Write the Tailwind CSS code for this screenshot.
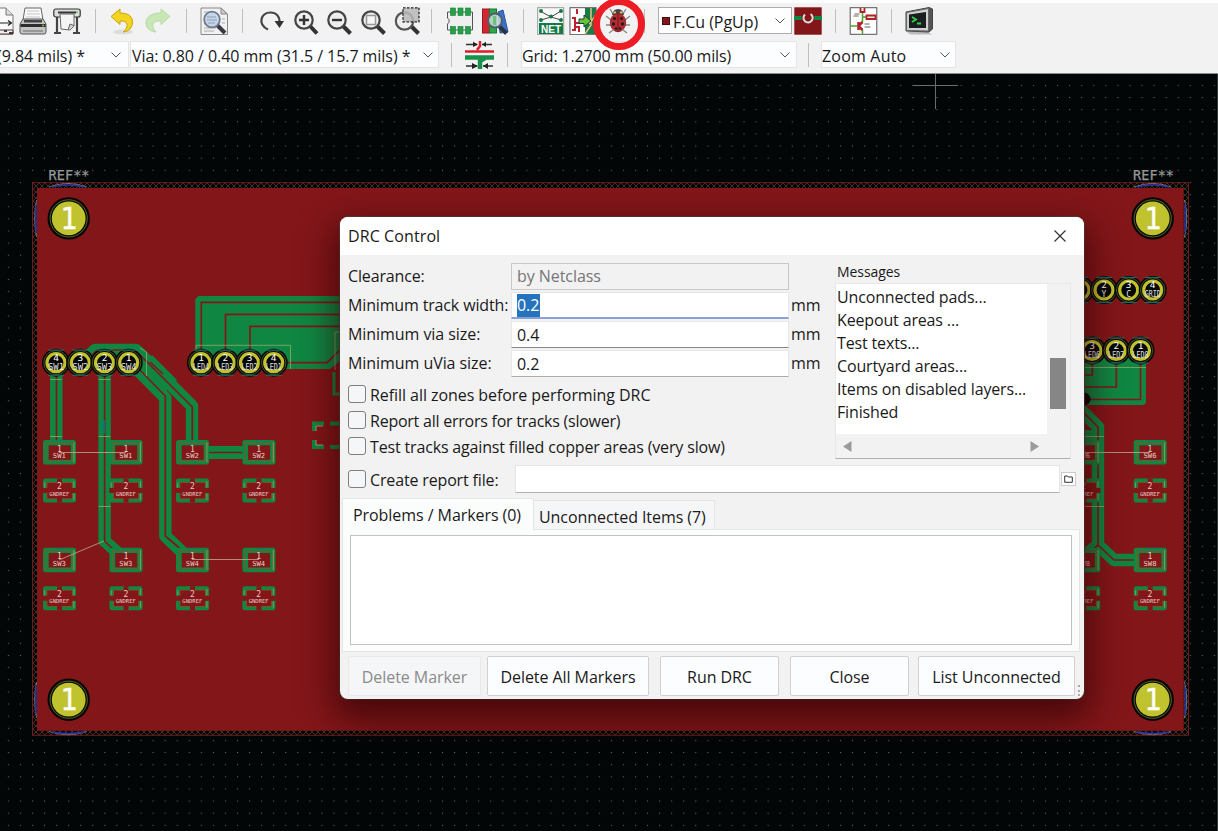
<!DOCTYPE html>
<html lang="en">
<head>
<meta charset="utf-8">
<title>Pcbnew - DRC Control</title>
<script src="https://cdn.jsdelivr.net/npm/@tailwindcss/browser@4"></script>
</head>
<body class="relative w-[1218px] h-[831px] overflow-hidden bg-[#020607] font-['Open_Sans','Noto_Sans',sans-serif] text-[16px] text-[#1a1a1a] tracking-[-0.06px]">

<!-- Board canvas -->
<svg class="absolute inset-0 tracking-normal" width="1218" height="831" viewBox="0 0 1218 831">
  <defs>
    <pattern id="grid" x="26.4" y="79.3" width="12.06" height="12.13" patternUnits="userSpaceOnUse"><rect x="5.6" y="5.6" width="1" height="1" fill="#6d7272"/></pattern>
    <pattern id="hatch" width="6" height="6" patternUnits="userSpaceOnUse"><path d="M0 6L6 0M0 0L6 6" stroke="#4a3f2c" stroke-width=".8" fill="none"/></pattern>
    <g id="hole"><circle r="21.2" fill="#050808"/><circle r="18.6" fill="none" stroke="#77772a" stroke-width=".8"/><circle r="16.9" fill="#c1c32e"/><text y="10.300" text-anchor="middle" font-size="30" fill="#fff" stroke="#fff" stroke-width=".3" font-family="DejaVu Sans Mono" textLength="17" lengthAdjust="spacingAndGlyphs">1</text></g>
    <g id="pin"><circle r="14" fill="#050808"/><circle r="12.2" fill="none" stroke="#6d6d28" stroke-width=".7"/><circle r="9" fill="#050808" stroke="#c1c32e" stroke-width="3.2"/><path d="M-8 -12.6H8M-8 12.6H8" stroke="#0e8c8c" stroke-width=".8"/></g>
    <g id="smd"><rect x="-16.3" y="-12.2" width="33" height="24.5" rx="2.5" fill="#0f8743"/><rect x="-13.4" y="-9.3" width="27" height="18.6" fill="none" stroke="#7c5a28" stroke-width=".9"/><rect x="-10.6" y="-7" width="22" height="14.5" fill="#831619"/><path d="M14.6 -10V10" stroke="#a3b06c" stroke-width=".7"/><path d="M-4 -11.5H8M3 9V11.5" stroke="#087b82" stroke-width=".8"/></g>
    <g id="gnd"><rect x="-16.3" y="-12" width="33" height="24" rx="2.5" fill="#0f8743"/><rect x="-12.4" y="-8.3" width="25.4" height="16.6" fill="#831619" stroke="#7c5a28" stroke-width=".9"/><path d="M-2.3 -12h5v24h-5zM-16.5 -2.5h33.5v5h-33.5z" fill="#831619"/><path d="M14.6 -9.5V-3M14.6 3V9.5M-14.6 -8V-3" stroke="#a3b06c" stroke-width=".7"/></g>
  </defs>
  <rect width="1218" height="831" fill="url(#grid)"/>
  <path d="M1217.5 74V831" stroke="#34393a"/>
  <path d="M913 85.5H958M935.5 74V109" stroke="#686c6c" stroke-width="1"/>
  <rect x="32.5" y="182.7" width="1156" height="552.6" fill="#030606"/>
  <rect x="32.5" y="182.7" width="1156" height="552.6" fill="url(#hatch)" stroke="#76181a" stroke-width="1"/>
  <path d="M49 187Q68 180 87 187M49 731.500Q68 738 87 731.500M1134 187Q1153 180 1171 187M1134 731.500Q1153 738 1171 731.500M36.500 200Q33 218 36.500 237M36.500 682Q33 700 36.500 718M1184.500 200Q1189 218 1184.500 237M1184.500 682Q1189 700 1184.500 718" fill="none" stroke="#8a8c93" stroke-width=".8"/>
  <path d="M52 187Q68 183 84 187M52 732Q68 735 84 732M1137 187Q1153 183 1169 187M1137 732Q1153 735 1169 732M36 205V232M36 687V714M1185 205V232M1185 687V714" fill="none" stroke="#29359b" stroke-width="1.6"/>
  <rect x="37" y="188" width="1146.7" height="542.8" fill="#831619"/>

  <g fill="none" stroke="#0f8743" stroke-width="12.4" stroke-linejoin="round">
    <path d="M56.300 366V445M104.600 366V541L118 553"/>
    <path d="M90 355L95 350H136L192 406V446"/>
    <path d="M130 362L165.300 398V536L182 552"/>
    <path d="M145 362L170 387" stroke-width="20"/>
    <path d="M205 452.500H247" stroke-width="13"/>
    <path d="M1076 405L1098 427V545L1114 560H1138M1098 545L1084 556"/>
  </g>
  <path d="M195.300 362V299L198.500 296H345V357L330 369H195.300Z" fill="#0f8743"/>
  <path d="M1080 356H1146V401Q1146 405 1142 405H1080Z" fill="#0f8743"/>
  <path d="M1080 398h5v40h-5zM1080 430H1104V445H1080zM1092 440H1104V500H1092z" fill="#0f8743"/>
  <g fill="none" stroke="#831619" stroke-width="1.700">
    <path d="M56.500 366V446M104.600 366V541L118 554M92 355L97 350H135L192.300 407V446M136 366L165.300 396V536L184 552M150 362L163 374M205 452.500H247"/>
    <path d="M201.300 362V302.300H345M225.500 362V314.300H345M250 362V326.300H345M286 362.700H327L340 350M1080 375H1092.300V358M1080 387H1116.300V358M1080 399.500H1140.500V358M1080 409L1098 427V545L1114 560H1138M1098 545L1086 556"/>
  </g>
  <g fill="none" stroke="#a3b06c" stroke-width=".7"><path d="M196 362V345.300H290.500V369M140 348L146.500 352V376M50 379.500H62M98.500 379.500H110.500M50 436.500H62M98.500 436.500H110.500M98.500 506.500H110.500M1084 367.500H1146M1084 436.500H1104M1084 506.500H1104M335 370V332H340"/></g>
  <path d="M334 372V394H340" fill="none" stroke="#0f8743" stroke-width="3"/>
  <path d="M324 423.500H314V431M314 440V447H324M330 423.500H342M330 447H342" fill="none" stroke="#0f8743" stroke-width="4"/>
  <path d="M323 426H316V431M316 440V445H323" fill="none" stroke="#b9c7a0" stroke-width=".7"/>
  <circle cx="1084" cy="399" r="6.500" fill="#050808"/>
  <path d="M102 429v-4l2-3v12" fill="none" stroke="#0a7a83" stroke-width="1.500"/>
  <g id="parts" font-family="DejaVu Sans Mono" text-anchor="middle"></g>
  <path d="M59 452.500H126M59 560L104 541M192 559.500H259M1083 452.500H1150" stroke="#c3a98a" stroke-width=".8" fill="none"/>
  <g fill="#969898" stroke="#969898" stroke-width=".25" font-family="DejaVu Sans Mono" font-size="13.500"><text x="48.500" y="179.500" textLength="41">REF**</text><text x="1133" y="179.500" textLength="41">REF**</text></g>
</svg>
<script>
  const out = [];
  const use = (id, x, y) => out.push(`<use href="#${id}" x="${x}" y="${y}"/>`);
  const label = (s, x, y, size, len, fill) => out.push(`<text x="${x}" y="${y}" font-size="${size}" fill="${fill}"${len ? ` textLength="${len}" lengthAdjust="spacingAndGlyphs"` : ''}>${s}</text>`);
  const pin = (x, y, n, name) => { use('pin', x, y); label(n, x, y - 2, 9.5, 0, '#fff'); if (name) label(name, x, y + 7.300, 8, name.length > 1 ? 16 : 0, '#e4e4e4'); };
  [[68.7, 218.4], [68.7, 699.7], [1152.7, 218.4], [1152.7, 699.7]].forEach(p => use('hole', p[0], p[1]));
  [56, 80.3, 104.5, 128.7].forEach((x, i) => pin(x, 362.7, 4 - i, 'SW' + (i + 1)));
  [201, 225.3, 249.5, 273.7].forEach((x, i) => pin(x, 362.7, i + 1, 'LED' + (4 - i)));
  [1080, 1104, 1128.7, 1152.7].forEach((x, i) => pin(x, 290, i + 1, ['C', 'Y', 'C', 'GRID'][i]));
  [1092, 1116.3, 1140.5].forEach((x, i) => pin(x, 350.5, 3 - i, 'LED' + (6 + i)));
  const pads = (x, a, b) => [[452.3, a], [560, b]].forEach(([y, name]) => {
    use('smd', x, y); label(1, x, y - .8, 8, 0, '#e9cdc5'); label(name, x, y + 5.7, 7, 13, '#e9cdc5');
    const g = y + 38.300; use('gnd', x, g); label(2, x, g - 1.200, 8, 0, '#e9cdc5'); label('GNDREF', x, g + 5, 5.5, 20, '#e9cdc5');
  });
  pads(59.300, 'SW1', 'SW3'); pads(125.800, 'SW1', 'SW3'); pads(192.300, 'SW2', 'SW4'); pads(258.700, 'SW2', 'SW4');
  pads(1083.500, 'SW6', 'SW8'); pads(1150, 'SW6', 'SW8');
  document.getElementById('parts').innerHTML = out.join('');
</script>

<!-- Toolbars -->
<header class="relative h-[74px] bg-[#f2f2f2] border-t-[3px] border-t-white border-b border-b-[#8b8b8b] overflow-visible">
  <div class="flex items-start h-[38px] pt-1">
    <svg class="-ml-[14px] w-7 h-7 shrink-0" viewBox="0 0 28 28"><path d="M3 1H20L27 8V27H3Z" fill="#fafafa" stroke="#777"/><path d="M20 1V8H27" fill="#ddd" stroke="#777"/><path d="M8 16H25M22 13.500L25.500 16L22 18.500" stroke="#222" fill="none" stroke-width="1.200"/><path d="M5 23H27V27H5Z" fill="#eee" stroke="#4c3734"/><path d="M18 24H21M23 26H27" stroke="#4c3734" stroke-width="2"/></svg>
    <svg class="ml-[5px] w-7 h-7 shrink-0" viewBox="0 0 28 28"><path d="M6 1H22L24 13H4Z" fill="#fafafa" stroke="#666"/><path d="M8 4H20M8 7H21M7 10H21" stroke="#c5c5c5"/><path d="M4 12H24L27 17V25Q27 27 25 27H3Q1 27 1 25V17Z" fill="#c4c4c4" stroke="#555"/><path d="M1.500 17H26.500V20H1.500Z" fill="#2e2e2e"/><path d="M5 13H23V15.500H5Z" fill="#444"/><path d="M4 24H24" stroke="#888" stroke-width="1.500"/><circle cx="24" cy="18.500" r="1" fill="#6d3"/></svg>
    <svg class="ml-[6px] w-7 h-7 shrink-0" viewBox="0 0 28 28"><path d="M4 8V25M24 8V25M1 26H8M20 26H27" stroke="#444" stroke-width="2.200"/><rect x=".8" y="2" width="26.400" height="8" rx="2" fill="#ddd" stroke="#333" stroke-width="1.200"/><path d="M5 5.500H23" stroke="#333" stroke-width="2"/><path d="M7 7H21V19L17 23L8 22Z" fill="#f4f4f4" stroke="#666"/><path d="M15 23L17 17L21 18.500" fill="#ccc" stroke="#666"/><circle cx="24" cy="5" r="1" fill="#5d3"/></svg>
    <i class="ml-[14px] mt-[2px] w-px h-6 bg-[#bfbfbf] shrink-0"></i>
    <svg class="ml-[13px] w-7 h-7 shrink-0" viewBox="0 0 28 28"><ellipse cx="14" cy="25" rx="10" ry="2.500" fill="#ddd"/><path d="M2 9.500L11 2V6C20 6 24 10 23.500 16C23 21 20 24.500 14 25C18 22 19 18 17 15.500Q15 13.500 11 14V17.500Z" fill="#f3d41e" stroke="#c9a21c" stroke-width="1"/></svg>
    <svg class="ml-[7px] w-7 h-7 shrink-0" viewBox="0 0 28 28"><path d="M26 9.500L17 2V6C7 6 2 10 2 16C2 21 6 24.500 12 25C8 21 8 17 10.500 15Q13 13.500 17 14V17.500Z" fill="#c8e7b5" stroke="#b4dba4" stroke-width="1"/></svg>
    <i class="ml-[14px] mt-[2px] w-px h-6 bg-[#bfbfbf] shrink-0"></i>
    <svg class="ml-[13px] w-7 h-7 shrink-0" viewBox="0 0 28 28"><path d="M1 1H21L27.500 7V27.500H1Z" fill="#f1f1f1" stroke="#888"/><path d="M21 1V7H27Z" fill="#ccc" stroke="#888"/><path d="M4 5H12M4 9H6M4 13H5M4 17H6M4 21H16M4 24H14M22 12H25M22 16H25" stroke="#aaa"/><path d="M17 18L25 26" stroke="#3b3b45" stroke-width="4"/><circle cx="12" cy="12.500" r="7.800" fill="#c7d6e8" stroke="#6d7c92" stroke-width="1.800"/><path d="M7 10H16M7 13H17M8 16H15" stroke="#8b9cb5"/></svg>
    <i class="ml-[14px] mt-[2px] w-px h-6 bg-[#bfbfbf] shrink-0"></i>
    <svg class="ml-[15px] w-7 h-7 shrink-0" viewBox="0 0 28 28"><path d="M10 22.500C-1 17 3 5.500 12.500 5.500C18 5.500 22 9 21.500 16" fill="none" stroke="#444" stroke-width="2.200"/><path d="M16.500 14H26L21.500 21Z" fill="#333"/></svg>
    <svg class="ml-[6px] w-7 h-7 shrink-0" viewBox="0 0 28 28"><path d="M18 19L25 26.500" stroke="#333" stroke-width="4"/><circle cx="12" cy="13" r="8.700" fill="#eee" stroke="#444" stroke-width="2.200"/><path d="M7 13H17M12 8V18" stroke="#333" stroke-width="2.400"/></svg>
    <svg class="ml-[5px] w-7 h-7 shrink-0" viewBox="0 0 28 28"><path d="M18 19L25.500 26.500" stroke="#333" stroke-width="4"/><circle cx="12" cy="13" r="8.700" fill="#eee" stroke="#444" stroke-width="2.200"/><path d="M7 13H17" stroke="#333" stroke-width="2.400"/></svg>
    <svg class="ml-[6px] w-7 h-7 shrink-0" viewBox="0 0 28 28"><path d="M18 19L25.500 26.500" stroke="#333" stroke-width="4"/><circle cx="12" cy="13" r="8.700" fill="#eee" stroke="#444" stroke-width="2.200"/><rect x="7.500" y="8.500" width="9" height="9" fill="#f6f6f6" stroke="#999" stroke-width="1.500"/></svg>
    <svg class="ml-[6px] w-7 h-7 shrink-0" viewBox="0 0 28 28"><path d="M18 19L25.500 26.500" stroke="#333" stroke-width="4"/><circle cx="11.500" cy="14" r="8.700" fill="#eee" stroke="#555" stroke-width="2.200"/><rect x="10" y=".8" width="16" height="14" fill="#b8b8b8" fill-opacity=".85" stroke="#222" stroke-width="1.300" stroke-dasharray="2.500 1.500"/></svg>
    <i class="ml-[10px] mt-[2px] w-px h-6 bg-[#bfbfbf] shrink-0"></i>
    <svg class="ml-[14px] w-7 h-7 shrink-0" viewBox="0 0 28 28"><path d="M1.500 5H26.500V23H1.500V17Q5 14 1.500 11Z" fill="#efefef" stroke="#555"/><g fill="#24a148" stroke="#17803a" stroke-width=".6"><rect x="4.500" y="1" width="5" height="7.500"/><rect x="12" y="1" width="5" height="7.500"/><rect x="19.500" y="1" width="5" height="7.500"/><rect x="4.500" y="19.500" width="5" height="7.500"/><rect x="12" y="19.500" width="5" height="7.500"/><rect x="19.500" y="19.500" width="5" height="7.500"/></g></svg>
    <svg class="ml-[7px] w-7 h-7 shrink-0" viewBox="0 0 28 28"><rect x="1.500" y="2" width="7" height="24" fill="#d42630" stroke="#9e151e"/><rect x="8.500" y="2" width="7" height="24" fill="#2ba74b" stroke="#167b31"/><path d="M17 5L22 3L27 25L19 26Z" fill="#3973cf" stroke="#2553a0"/><path d="M18 19L25.500 26.500" stroke="#2c3240" stroke-width="4"/><circle cx="14" cy="13.500" r="7" fill="#c4dbd8" fill-opacity=".85" stroke="#50606a" stroke-width="2"/><path d="M12 9H15V18H12Z" fill="#74bd82"/></svg>
    <i class="ml-[14px] mt-[2px] w-px h-6 bg-[#bfbfbf] shrink-0"></i>
    <svg class="ml-[13px] w-7 h-7 shrink-0" viewBox="0 0 28 28"><rect x=".7" y=".7" width="26" height="27" fill="#f8f8f8" stroke="#999"/><path d="M3 4L14 10L24 4M14 10L4 13M14 10L24 13" stroke="#444" fill="none"/><g fill="#137a45"><circle cx="4" cy="4" r="2"/><circle cx="24" cy="4" r="2"/><circle cx="14" cy="9.500" r="2"/><circle cx="4" cy="13" r="2"/><circle cx="24" cy="13" r="2"/></g><rect x="2" y="16" width="24" height="11" fill="#137a45"/><text x="14" y="25.500" text-anchor="middle" textLength="20" lengthAdjust="spacingAndGlyphs" font-family="Liberation Sans" font-weight="700" font-size="11" fill="#fff">NET</text></svg>
    <svg class="ml-[4px] w-7 h-7 shrink-0" viewBox="0 0 28 28"><rect x="1" y=".7" width="26" height="27" fill="#fff" stroke="#555"/><rect x="16" y="1" width="11" height="26" fill="#197c46"/><path d="M16 27L22 18V1M27 8L20 17" stroke="#d9ca83" fill="none" stroke-width="1.500"/><path d="M3 11H6V23H3M6 16H10M6 20H10V25M8 2V7" stroke="#be2430" stroke-width="2" fill="none"/><path d="M10 12H15V8L22 14L15 20V16.500H10Z" fill="#63c531" stroke="#234" /></svg>
    <svg class="ml-[7px] w-7 h-7 shrink-0" viewBox="0 0 28 28"><path d="M9 7L6 2M19 7L22 2M7 13L2 9M21 13L26 9M7 18L2 18M21 18L26 18M9 23L5 26M19 23L23 26" stroke="#888" stroke-width="1.400"/><path d="M8 8Q9 2 14 2Q19 2 20 8Z" fill="#444"/><path d="M9.500 5.500H12M16 5.500H18.500" stroke="#ddcf7a" stroke-width="2"/><ellipse cx="14" cy="15.500" rx="7.700" ry="9.300" fill="#b82b31" stroke="#7d2325" stroke-width=".8"/><path d="M14 7V25" stroke="#58191a"/><g fill="#2b1a1b"><circle cx="10.500" cy="11.500" r="1.600"/><circle cx="17.500" cy="11.500" r="1.600"/><circle cx="9.500" cy="17" r="1.700"/><circle cx="18.500" cy="17" r="1.700"/><circle cx="12" cy="21.500" r="1.200"/><circle cx="16" cy="21.500" r="1.200"/></g></svg>
    <i class="ml-[12px] mt-[2px] w-px h-6 bg-[#bfbfbf] shrink-0"></i>
    <div class="ml-[13px] w-[134px] h-[27px] bg-white border border-[#adadad] flex items-center shrink-0 whitespace-nowrap">
      <i class="ml-[3px] w-2 h-2 bg-[#831619] border border-[#4d0c0e]"></i><span class="ml-[3px] w-[89px] pt-[2px] text-[16px]">F.Cu (PgUp)</span>
      <svg class="ml-auto mr-[5px]" width="12" height="8" viewBox="0 0 12 8"><path d="M1.500 1.500L6 6L10.500 1.500" stroke="#555" fill="none"/></svg>
    </div>
    <svg class="ml-[2px] w-7 h-7 shrink-0" viewBox="0 0 28 28"><rect x=".3" y=".3" width="27.400" height="27.400" fill="#831619"/><rect y="9" width="28" height="4" fill="#0f8743"/><circle cx="14" cy="11" r="6.500" fill="#831619"/><path d="M11 7.500A4.600 4.600 0 1 0 16.500 7" fill="none" stroke="#ddd" stroke-width="2"/></svg>
    <i class="ml-[13px] mt-[2px] w-px h-6 bg-[#bfbfbf] shrink-0"></i>
    <svg class="ml-[13px] w-[29px] h-7 shrink-0" viewBox="0 0 28 28"><rect x=".7" y=".7" width="26.600" height="26.600" fill="#fdfdfd" stroke="#555"/><path d="M13 5V15M13 10H17M1 19H8M13 23V27" stroke="#48a52d" stroke-width="1.500" fill="none"/><path d="M11 1V5H15V1M17 8.500H26V12H17Z" stroke="#b3222a" stroke-width="1.800" fill="#f7e9dc"/><path d="M9 15V23M9 19L13 15M9 19L13 23" stroke="#b3222a" stroke-width="2.500"/><path d="M4 9H9M5 7H10M15 17H20M15 20H21" stroke="#666"/></svg>
    <i class="ml-[13px] mt-[2px] w-px h-6 bg-[#bfbfbf] shrink-0"></i>
    <svg class="ml-[13px] w-7 h-7 shrink-0" viewBox="0 0 28 28"><path d="M2 25H23L27 27.500H5Z" fill="#bbb"/><path d="M1 5L24 .5L27.500 2V22L24 25L1 24Z" fill="#555" stroke="#444"/><path d="M1.500 5.500L23.500 1.500V24L1.500 23.500Z" fill="#d0d0d0" stroke="#666"/><path d="M4 7.500L21 5V21L4 21Z" fill="#1c1f1f"/><path d="M7 10L11 12.500L7 15M12 16.500H16" fill="none" stroke="#35d04c" stroke-width="1.800"/></svg>
  </div>
  <div class="flex items-start h-[27px] whitespace-nowrap text-[16px] leading-[27px]">
    <div class="w-[129px] h-[27px] bg-[#fbfdff] border border-[#e5e5e5] border-l-0 flex items-center justify-between shrink-0"><span class="-ml-[3px] pt-[4px]">(9.84 mils) *</span><svg class="mr-[6px]" width="12" height="8" viewBox="0 0 12 8"><path d="M1.500 1.500L6 6L10.500 1.500" stroke="#555" fill="none"/></svg></div>
    <div class="ml-[1px] w-[309px] h-[27px] bg-[#fbfdff] border border-[#e5e5e5] flex items-center justify-between shrink-0"><span class="ml-px pt-[4px]">Via: 0.80 / 0.40 mm (31.5 / 15.7 mils) *</span><svg class="mr-[4px]" width="12" height="8" viewBox="0 0 12 8"><path d="M1.500 1.500L6 6L10.500 1.500" stroke="#555" fill="none"/></svg></div>
    <i class="ml-[12px] mt-[2px] w-px h-6 bg-[#bfbfbf] shrink-0"></i>
    <svg class="ml-[13px] w-[29px] h-7 shrink-0" viewBox="0 0 29 28"><path d="M0 10.500H29" stroke="#d91f2b" stroke-width="2.500"/><path d="M0 16.500H29" stroke="#16924a" stroke-width="4.500"/><path d="M15 0V5L12 9" stroke="#d91f2b" stroke-width="2.500" fill="none"/><path d="M20 17L15 20V28" stroke="#16924a" stroke-width="4.500" fill="none"/><path d="M1 3.500H12M17 3.500H27M1 25H12M18 25H28" stroke="#333" stroke-width="1.300"/><path d="M8 .8L13 3.500L8 6ZM21 .8L17 3.500L21 6ZM7 22L13 25L7 28ZM23 22L18 25L23 28Z" fill="#222"/></svg>
    <i class="ml-[13px] mt-[2px] w-px h-6 bg-[#bfbfbf] shrink-0"></i>
    <div class="ml-[13px] w-[276px] h-[27px] bg-[#fbfdff] border border-[#e5e5e5] flex items-center justify-between shrink-0"><span class="pt-[4px] tracking-[-0.15px]">Grid: 1.2700 mm (50.00 mils)</span><svg class="mr-[5px]" width="12" height="8" viewBox="0 0 12 8"><path d="M1.500 1.500L6 6L10.500 1.500" stroke="#555" fill="none"/></svg></div>
    <i class="ml-[11px] mt-[2px] w-px h-6 bg-[#bfbfbf] shrink-0"></i>
    <div class="ml-[12px] w-[135px] h-[27px] bg-[#fbfdff] border border-[#e5e5e5] flex items-center justify-between shrink-0"><span class="pt-[4px] tracking-[0.2px]">Zoom Auto</span><svg class="mr-[4px]" width="12" height="8" viewBox="0 0 12 8"><path d="M1.500 1.500L6 6L10.500 1.500" stroke="#555" fill="none"/></svg></div>
  </div>
  <div class="absolute left-[593px] -top-[5px] w-[52px] h-[52px] rounded-full border-[7px] border-[#ee1c25]"></div>
</header>

<!-- DRC dialog -->
<section class="absolute left-[340px] top-[217px] w-[744px] h-[482px] rounded-[8px] bg-[#f2f2f2] overflow-hidden shadow-[0_14px_34px_6px_rgba(40,0,0,.65),0_0_0_1px_rgba(90,70,70,.8)] whitespace-nowrap flex flex-col">
  <div class="h-[38px] bg-white flex items-center justify-between pl-[8px] pr-[17px] shrink-0"><span class="tracking-[0.1px]">DRC Control</span><svg width="14" height="14" viewBox="0 0 14 14"><path d="M1.500 1.500L12.500 12.500M12.500 1.500L1.500 12.500" stroke="#333" stroke-width="1.200"/></svg></div>
  <div class="flex h-[205px] shrink-0">
    <div class="w-[495px] pl-[8px] pt-[8px] shrink-0">
      <div class="flex items-center h-[27px] mb-[2px]"><span class="w-[163px] pb-[2px] tracking-[-0.15px]">Clearance:</span><div class="w-[278px] h-[27px] border border-[#c9c9c9] pl-[5px] leading-[25px] text-[#757575]">by Netclass</div></div>
      <div class="flex items-center h-[27px] mb-[2px]"><span class="w-[163px] pb-[2px] tracking-[-0.15px]">Minimum track width:</span><div class="w-[278px] h-[27px] bg-white border border-[#e7e7e7] border-b-2 border-b-[#8b9fd9] pl-[5px] flex items-center"><span class="bg-[#2673bd] text-white h-[23px] leading-[23px] w-[23px]">0.2</span></div><span class="ml-[2px] pb-[2px]">mm</span></div>
      <div class="flex items-center h-[27px] mb-[2px]"><span class="w-[163px] pb-[2px]">Minimum via size:</span><div class="w-[278px] h-[27px] bg-white border border-[#e7e7e7] border-b-[#858585] pl-[5px] leading-[26px]">0.4</div><span class="ml-[2px] pb-[2px]">mm</span></div>
      <div class="flex items-center h-[27px]"><span class="w-[163px] pb-[2px]">Minimum uVia size:</span><div class="w-[278px] h-[27px] bg-white border border-[#e7e7e7] border-b-[#ababab] pl-[5px] leading-[26px]">0.2</div><span class="ml-[2px] pb-[2px]">mm</span></div>
      <div class="flex items-center h-[26px] mt-[4px]"><i class="w-[18px] h-[18px] mr-[4px] mb-[1px] rounded-[3px] border border-[#808080] bg-[#f5f6f8]"></i><span class="pt-px">Refill all zones before performing DRC</span></div>
      <div class="flex items-center h-[26px]"><i class="w-[18px] h-[18px] mr-[4px] mb-[1px] rounded-[3px] border border-[#808080] bg-[#f5f6f8]"></i><span class="pt-px tracking-[-0.24px]">Report all errors for tracks (slower)</span></div>
      <div class="flex items-center h-[26px]"><i class="w-[18px] h-[18px] mr-[4px] mb-[1px] rounded-[3px] border border-[#808080] bg-[#f5f6f8]"></i><span class="pt-px tracking-[-0.16px]">Test tracks against filled copper areas (very slow)</span></div>
    </div>
    <div class="pt-[5px]">
      <div class="pl-[2px] h-[23px] leading-[23px] text-[14px]">Messages</div>
      <div class="w-[236px] h-[176px] border border-[#e8e8e8] border-b-[#b0b0b0]">
        <div class="flex h-[150px]">
          <div class="w-[211px] bg-white pl-px pt-[2px] leading-[23px] tracking-[-0.15px]"><div>Unconnected pads...</div><div>Keepout areas ...</div><div>Test texts...</div><div>Courtyard areas...</div><div>Items on disabled layers...</div><div>Finished</div></div>
          <i class="ml-[3px] mt-[74px] w-[16px] h-[51px] bg-[#868686]"></i>
        </div>
        <div class="flex justify-between pl-[7px] pr-[31px] pt-[7px]"><svg width="9" height="11" viewBox="0 0 9 11"><path d="M8.500 0V11L0 5.500Z" fill="#9b9b9b"/></svg><svg width="9" height="11" viewBox="0 0 9 11"><path d="M.5 0V11L9 5.500Z" fill="#9b9b9b"/></svg></div>
      </div>
    </div>
  </div>
  <div class="flex items-center h-[28px] mt-[5px] pl-[8px] shrink-0"><i class="w-[18px] h-[18px] mr-[4px] rounded-[3px] border border-[#808080] bg-[#f5f6f8]"></i><span class="w-[145px] pt-[2px] tracking-[-0.15px]">Create report file:</span><div class="w-[545px] h-[28px] bg-white border border-[#e5e5e5] border-b-[#b0b0b0]"></div><div class="ml-px w-[15px] h-[14px] bg-white border border-[#ccc] flex items-center justify-center"><svg width="9" height="8" viewBox="0 0 9 8"><path d="M.7 7.300V1H3.500L4.200 2H8.300V7.300Z" fill="none" stroke="#333" stroke-width="1"/></svg></div></div>
  <div class="flex items-end h-[37px] pl-[2px] shrink-0">
    <div class="w-[192px] h-[32px] bg-[#fbfdfc] border border-b-0 border-[#e5e5e5] pl-[10px] leading-[33px]">Problems / Markers (0)</div>
    <div class="w-[181px] h-[30px] bg-[#f5f6f8] border border-l-0 border-[#e5e5e5] pl-[5px] leading-[33px]">Unconnected Items (7)</div>
    <div class="w-[365px] h-px bg-[#e5e5e5]"></div>
  </div>
  <div class="ml-[2px] w-[738px] h-[122px] bg-[#fbfdfc] border border-t-0 border-[#e5e5e5] pt-[5px] pl-[7px] shrink-0"><div class="w-[722px] h-[110px] bg-white border border-[#c2c2c2]"></div></div>
  <div class="flex pt-[4px] pl-[8px] text-center leading-[40px]">
    <div class="w-[133px] h-[40px] rounded-[2px] border border-[#eaeaea] bg-[#f5f6f8] text-[#8b8b8b]">Delete Marker</div>
    <div class="ml-[6px] w-[162px] h-[40px] rounded-[2px] border border-[#d0d0d0] bg-[#fcfdfe]">Delete All Markers</div>
    <div class="ml-[11px] w-[119px] h-[40px] rounded-[2px] border border-[#d0d0d0] bg-[#fcfdfe]">Run DRC</div>
    <div class="ml-[11px] w-[119px] h-[40px] rounded-[2px] border border-[#d0d0d0] bg-[#fcfdfe]">Close</div>
    <div class="ml-[9px] w-[157px] h-[40px] rounded-[2px] border border-[#d0d0d0] bg-[#fcfdfe]">List Unconnected</div>
    <i class="ml-[1px] mt-[29px] w-[4px] h-[11px] border-r-2 border-dotted border-[#aaa]"></i>
  </div>
</section>
</body>
</html>
